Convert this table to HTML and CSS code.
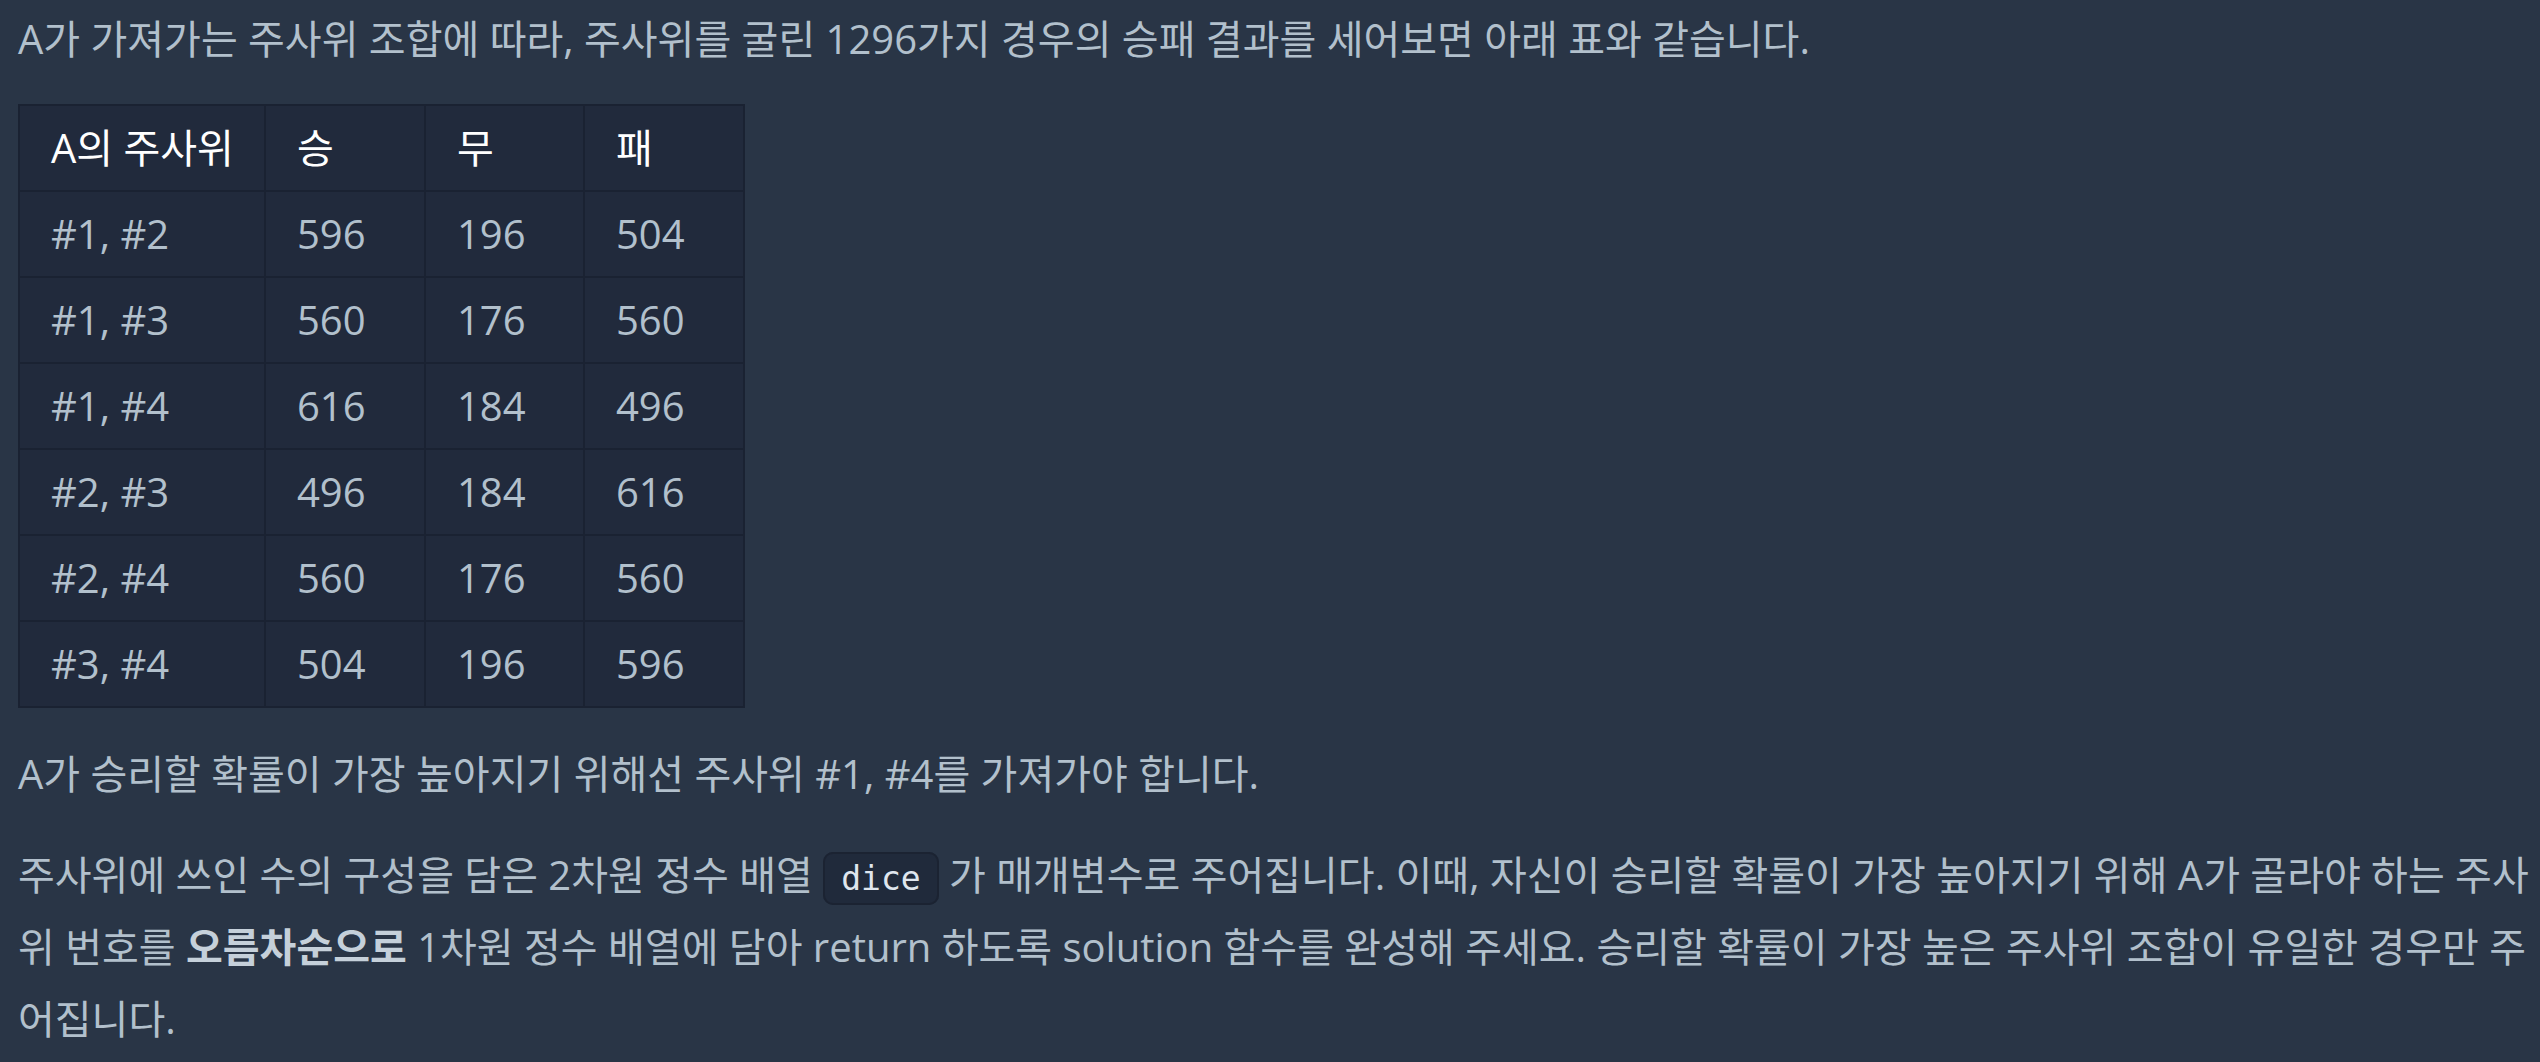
FILE: index.html
```html
<!DOCTYPE html>
<html lang="ko">
<head>
<meta charset="utf-8">
<link rel="stylesheet" href="styles.css">
<title>주사위 고르기</title>
</head>
<body>
<div class="content">
  <p>A가 가져가는 주사위 조합에 따라, 주사위를 굴린 1296가지 경우의 승패 결과를 세어보면 아래 표와 같습니다.</p>
  <table class="result">
    <colgroup>
      <col class="c1"><col class="c2"><col class="c3"><col class="c4">
    </colgroup>
    <thead>
      <tr><th>A의 주사위</th><th>승</th><th>무</th><th>패</th></tr>
    </thead>
    <tbody>
      <tr><td>#1, #2</td><td>596</td><td>196</td><td>504</td></tr>
      <tr><td>#1, #3</td><td>560</td><td>176</td><td>560</td></tr>
      <tr><td>#1, #4</td><td>616</td><td>184</td><td>496</td></tr>
      <tr><td>#2, #3</td><td>496</td><td>184</td><td>616</td></tr>
      <tr><td>#2, #4</td><td>560</td><td>176</td><td>560</td></tr>
      <tr><td>#3, #4</td><td>504</td><td>196</td><td>596</td></tr>
    </tbody>
  </table>
  <p>A가 승리할 확률이 가장 높아지기 위해선 주사위 #1, #4를 가져가야 합니다.</p>
  <p>주사위에 쓰인 수의 구성을 담은 2차원 정수 배열 <code>dice</code> 가 매개변수로 주어집니다. 이때, 자신이 승리할 확률이 가장 높아지기 위해 A가 골라야 하는 주사위 번호를 <strong>오름차순으로</strong> 1차원 정수 배열에 담아 return 하도록 solution 함수를 완성해 주세요. 승리할 확률이 가장 높은 주사위 조합이 유일한 경우만 주어집니다.</p>
</div>
</body>
</html>
```

FILE: styles.css
```css
html, body {
  margin: 0;
  background: #293546;
}
body {
  color: #b2c0cc;
  font-family: "Open Sans", "Noto Sans CJK KR", sans-serif;
  font-size: 40px;
  line-height: 72px;
}
.content {
  padding: 3px 0 0 18px;
}
p {
  margin: 0 0 29px;
}
.result {
  border-collapse: collapse;
  table-layout: fixed;
  width: 725px;
  margin: 0 0 30px;
  background: #212a3c;
}
.c1 { width: 246px; }
.c2 { width: 160px; }
.c3 { width: 159px; }
.c4 { width: 160px; }
.result th,
.result td {
  border: 2px solid #1a2232;
  height: 84px;
  padding: 0 0 0 31px;
  text-align: left;
  vertical-align: middle;
}
.result th {
  font-weight: normal;
  color: #ffffff;
}
code {
  font-family: "DejaVu Sans Mono", monospace;
  font-size: 33px;
  line-height: 1;
  color: #dfe6ee;
  background: #202a3b;
  border: 2px solid #1b2332;
  border-radius: 10px;
  padding: 5px 16px;
}
strong {
  font-weight: bold;
  color: #c5d0da;
}
```
